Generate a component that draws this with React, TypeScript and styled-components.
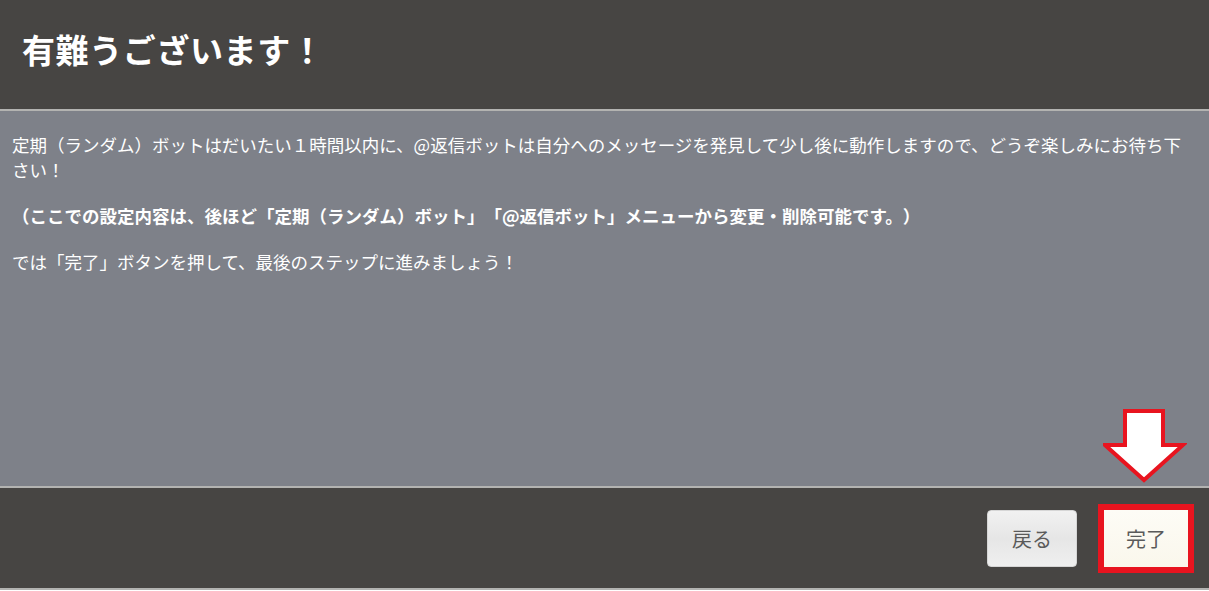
import styled, { createGlobalStyle } from "styled-components";

const GlobalStyle = createGlobalStyle`
  html, body {
    margin: 0;
    padding: 0;
    background: #ffffff;
  }
  body {
    font-family: "Noto Sans CJK JP", "Noto Sans", sans-serif;
    text-spacing-trim: space-all;
    font-feature-settings: "chws" 0, "halt" 0;
  }
`;

const App = () => {
  return (
    <>
      <GlobalStyle />
      <Dialog>
        <Header>
          <Title>有難うございます！</Title>
        </Header>
        <Body>
          <Paragraph>
            定期（ランダム）ボットはだいたい１時間以内に、@返信ボットは自分へのメッセージを発見して少し後に動作しますので、どうぞ楽しみにお待ち下さい！
          </Paragraph>
          <Paragraph bold>
            （ここでの設定内容は、後ほど「定期（ランダム）ボット」「@返信ボット」メニューから変更・削除可能です。）
          </Paragraph>
          <Paragraph>
            では「完了」ボタンを押して、最後のステップに進みましょう！
          </Paragraph>
        </Body>
        <Footer>
          <Button>戻る</Button>
          <Highlight>
            <Arrow viewBox="0 0 84 74" aria-hidden="true">
              <path
                d="M22 2 H60 V36 H80 L41 71 L2 36 H22 Z"
                fill="#ffffff"
                stroke="#e8141f"
                strokeWidth="4"
                strokeLinejoin="miter"
              />
            </Arrow>
            <Button primary>完了</Button>
          </Highlight>
        </Footer>
      </Dialog>
    </>
  );
};

export default App;

const Dialog = styled.div`
  width: 1209px;
  height: 591px;
  display: flex;
  flex-direction: column;
  box-sizing: border-box;
  border-bottom: 1px solid #ffffff;
`;

const Header = styled.header`
  height: 109px;
  flex: none;
  display: flex;
  align-items: center;
  padding: 0 22px;
  background: #474543;
  border-bottom: 2px solid #b3b3b1;
  box-sizing: content-box;
`;

const Title = styled.h1`
  margin: 0;
  padding-bottom: 12px;
  color: #ffffff;
  font-size: 33px;
  font-weight: 700;
  letter-spacing: 0.6px;
`;

const Body = styled.main`
  flex: 1;
  background: #7e8189;
  padding: 21px 12px 0;
  border-bottom: 2px solid #b3b3b1;
  overflow: hidden;
`;

const Paragraph = styled.p<{ bold?: boolean }>`
  margin: 0 0 21px;
  color: #ffffff;
  font-size: 17.5px;
  line-height: 25px;
  font-weight: ${(p) => (p.bold ? 700 : 400)};
`;

const Footer = styled.footer`
  height: 100px;
  flex: none;
  display: flex;
  justify-content: flex-end;
  align-items: center;
  gap: 21px;
  padding: 0 15px 0 0;
  background: #474543;
  border-bottom: 2px solid #b3b3b1;
`;

const Highlight = styled.div`
  position: relative;
  border: 6px solid #e8141f;
  display: flex;
`;

const Arrow = styled.svg`
  position: absolute;
  left: -1px;
  top: -101px;
  width: 84px;
  height: 74px;
`;

const Button = styled.button<{ primary?: boolean }>`
  width: ${(p) => (p.primary ? "84px" : "90px")};
  height: 57px;
  border: ${(p) => (p.primary ? "none" : "1px solid #d6d6d6")};
  border-radius: ${(p) => (p.primary ? "0" : "4px")};
  background: ${(p) =>
    p.primary
      ? "linear-gradient(#fdfcf6, #faf7ec)"
      : "linear-gradient(#f1f1f1, #e6e6e6 50%, #efefef)"};
  color: #5a5a5a;
  font-family: "Noto Sans CJK JP", "Noto Sans", sans-serif;
  font-size: 20px;
  padding: 0;
  cursor: pointer;
`;
